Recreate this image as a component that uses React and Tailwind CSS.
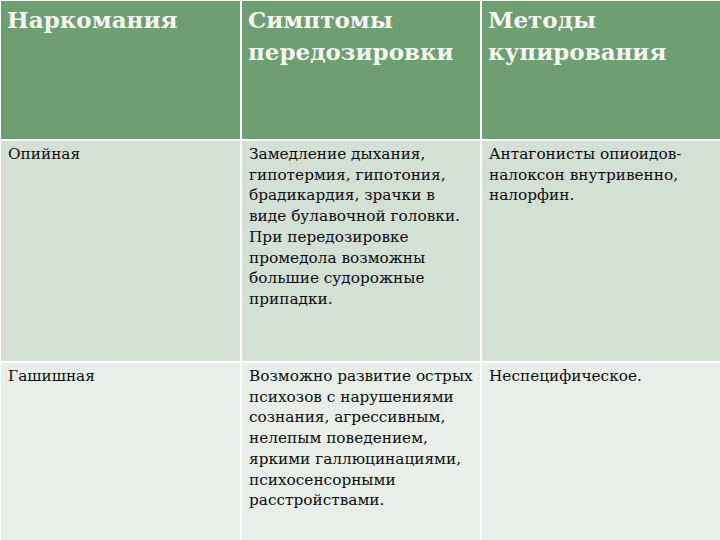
import React from 'react';

const rows = [
  {
    name: 'Опийная',
    symptoms: [
      'Замедление дыхания,',
      'гипотермия, гипотония,',
      'брадикардия, зрачки в',
      'виде булавочной головки.',
      'При передозировке',
      'промедола возможны',
      'большие судорожные',
      'припадки.',
    ],
    methods: ['Антагонисты опиоидов-', 'налоксон внутривенно,', 'налорфин.'],
    bg: 'bg-[#d4dfd6]',
    h: 'h-[220px]',
  },
  {
    name: 'Гашишная',
    symptoms: [
      'Возможно развитие острых',
      'психозов с нарушениями',
      'сознания, агрессивным,',
      'нелепым поведением,',
      'яркими галлюцинациями,',
      'психосенсорными',
      'расстройствами.',
    ],
    methods: ['Неспецифическое.'],
    bg: 'bg-[#e9eeea]',
    h: 'h-[177px]',
  },
];

const Lines = ({ lines }) => (
  <>
    {lines.map((l, i) => (
      <span key={i} className="block whitespace-nowrap">
        {l}
      </span>
    ))}
  </>
);

export default function App() {
  const head = 'bg-[#6e9e72] px-[6px] pt-[3px] text-[#f3f6f1] font-bold text-[23px] leading-[32px]';
  const cell = 'px-[7px] pt-[3px] text-[#0d0d0d] text-[15.3px] leading-[20.7px]';

  return (
    <div
      className="w-[720px] h-[540px] overflow-hidden bg-white"
      style={{ fontFamily: '"DejaVu Serif", "Liberation Serif", serif' }}
    >
      <div className="grid grid-cols-[239px_238px_1fr] gap-[2px] pl-[1px] pt-[1px]">
        <div className={`${head} h-[138px]`}>Наркомания</div>
        <div className={`${head} h-[138px]`}>
          <Lines lines={['Симптомы', 'передозировки']} />
        </div>
        <div className={`${head} h-[138px]`}>
          <Lines lines={['Методы', 'купирования']} />
        </div>

        {rows.map((r) => (
          <React.Fragment key={r.name}>
            <div className={`${cell} ${r.bg} ${r.h}`}>{r.name}</div>
            <div className={`${cell} ${r.bg} ${r.h}`}>
              <Lines lines={r.symptoms} />
            </div>
            <div className={`${cell} ${r.bg} ${r.h}`}>
              <Lines lines={r.methods} />
            </div>
          </React.Fragment>
        ))}
      </div>
    </div>
  );
}
